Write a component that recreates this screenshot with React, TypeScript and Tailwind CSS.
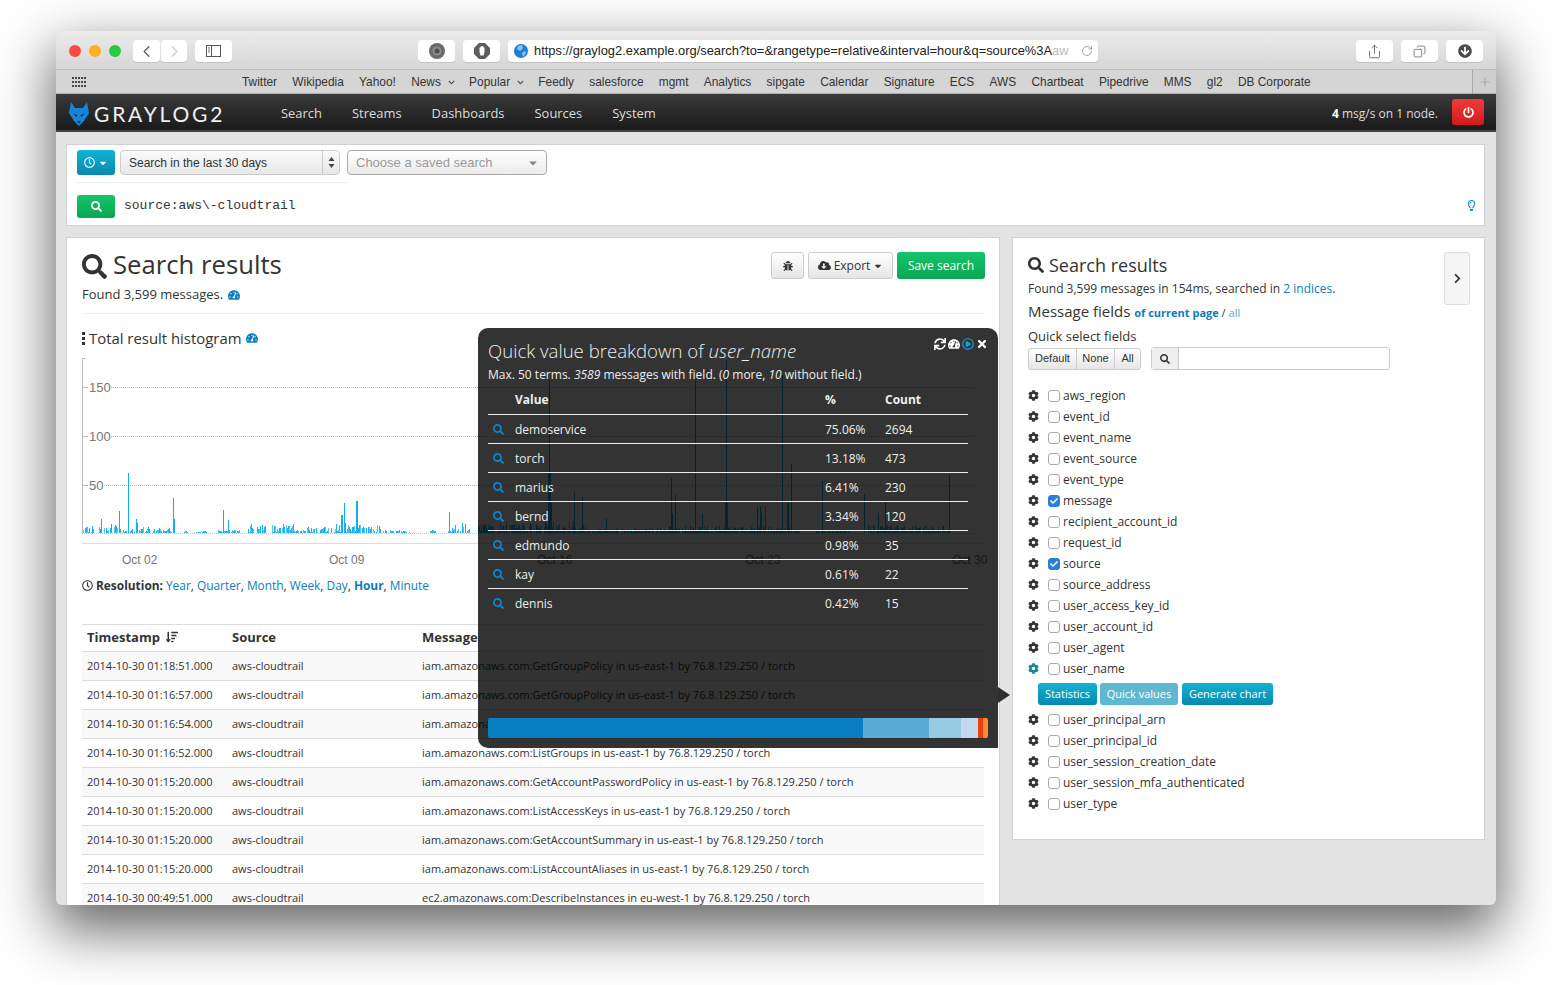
import React from 'react';
import {
  FaSearch, FaCog, FaSync, FaTachometerAlt, FaRegPlayCircle, FaTimes, FaRegClock, FaBug,
  FaCloudDownloadAlt, FaCaretDown, FaChevronRight, FaPowerOff, FaRegLightbulb, FaCheck,
  FaArrowCircleDown, FaChevronDown, FaSortAmountDown,
} from 'react-icons/fa';
import { ChevronLeft, ChevronRight, RotateCw, Share, Copy, Plus } from 'lucide-react';

const bookmarks = [
  { label: 'Twitter' }, { label: 'Wikipedia' }, { label: 'Yahoo!' }, { label: 'News', menu: true },
  { label: 'Popular', menu: true }, { label: 'Feedly' }, { label: 'salesforce' }, { label: 'mgmt' },
  { label: 'Analytics' }, { label: 'sipgate' }, { label: 'Calendar' }, { label: 'Signature' },
  { label: 'ECS' }, { label: 'AWS' }, { label: 'Chartbeat' }, { label: 'Pipedrive' }, { label: 'MMS' },
  { label: 'gl2' }, { label: 'DB Corporate' },
];

const navItems = ['Search', 'Streams', 'Dashboards', 'Sources', 'System'];

const quickValues = [
  ['demoservice', '75.06%', '2694'],
  ['torch', '13.18%', '473'],
  ['marius', '6.41%', '230'],
  ['bernd', '3.34%', '120'],
  ['edmundo', '0.98%', '35'],
  ['kay', '0.61%', '22'],
  ['dennis', '0.42%', '15'],
];

const rows = [
  ['2014-10-30 01:18:51.000', 'iam.amazonaws.com:GetGroupPolicy in us-east-1 by 76.8.129.250 / torch'],
  ['2014-10-30 01:16:57.000', 'iam.amazonaws.com:GetGroupPolicy in us-east-1 by 76.8.129.250 / torch'],
  ['2014-10-30 01:16:54.000', 'iam.amazonaws.com:GetUser in us-east-1 by 76.8.129.250 / torch'],
  ['2014-10-30 01:16:52.000', 'iam.amazonaws.com:ListGroups in us-east-1 by 76.8.129.250 / torch'],
  ['2014-10-30 01:15:20.000', 'iam.amazonaws.com:GetAccountPasswordPolicy in us-east-1 by 76.8.129.250 / torch'],
  ['2014-10-30 01:15:20.000', 'iam.amazonaws.com:ListAccessKeys in us-east-1 by 76.8.129.250 / torch'],
  ['2014-10-30 01:15:20.000', 'iam.amazonaws.com:GetAccountSummary in us-east-1 by 76.8.129.250 / torch'],
  ['2014-10-30 01:15:20.000', 'iam.amazonaws.com:ListAccountAliases in us-east-1 by 76.8.129.250 / torch'],
  ['2014-10-30 00:49:51.000', 'ec2.amazonaws.com:DescribeInstances in eu-west-1 by 76.8.129.250 / torch'],
];

const fieldsBefore = [
  'aws_region', 'event_id', 'event_name', 'event_source', 'event_type', 'message', 'recipient_account_id',
  'request_id', 'source', 'source_address', 'user_access_key_id', 'user_account_id', 'user_agent', 'user_name',
];
const fieldsAfter = [
  'user_principal_arn', 'user_principal_id', 'user_session_creation_date', 'user_session_mfa_authenticated', 'user_type',
];
const checkedFields = ['message', 'source'];

// spikes of the histogram: [x, height in px]
const spikes: [number, number][] = [
  [128, 60], [119, 22], [101, 14], [111, 9], [136, 14], [137, 10], [173, 35], [174, 14], [223, 23], [228, 13],
  [344, 30], [342, 18], [341, 18], [345, 10], [356, 32], [357, 32], [449, 21], [462, 10], [465, 9],
  [549, 153], [548, 60], [550, 60], [551, 30], [574, 41], [573, 12], [582, 36], [606, 15], [671, 55], [672, 20], [675, 38],
  [695, 153], [702, 19], [726, 173], [725, 30], [727, 30], [757, 26], [760, 27], [761, 20], [765, 27], [782, 158],
  [787, 30], [788, 30], [791, 69], [822, 52], [864, 39], [878, 20], [885, 31], [949, 58],
];

// low traffic runs: [from, to, max height]
const clusters: [number, number, number][] = [
  [83, 118, 8], [120, 127, 4], [130, 150, 6], [153, 172, 5], [183, 188, 2], [196, 207, 2], [218, 240, 3],
  [248, 266, 9], [272, 300, 9], [300, 332, 6], [332, 362, 10], [362, 388, 8], [390, 410, 3], [430, 436, 3],
  [446, 470, 9], [478, 530, 11], [530, 570, 11], [570, 590, 8], [592, 620, 4], [622, 650, 5], [650, 680, 7],
  [682, 730, 7], [730, 762, 7], [762, 790, 7], [790, 800, 3], [816, 850, 3], [868, 900, 8], [900, 945, 7], [946, 950, 4],
];

const noiseBars = clusters.flatMap(([from, to, max]) => {
  const bars: [number, number][] = [];
  for (let x = from; x < to; x++) {
    const r = Math.abs(Math.sin(x * 12.9898) * 43758.5453) % 1;
    if (r > (x > 478 ? 0.92 : 0.75)) continue;
    bars.push([x, 1 + Math.round(((r * 7.3) % 1) * (max - 1))]);
  }
  return bars;
});

const Histogram = () => (
  <svg width="920" height="220" className="block" style={{ fontFamily: '"Liberation Sans", sans-serif' }}>
    <line x1="0.5" y1="10" x2="0.5" y2="185" stroke="#bbb" />
    <line x1="0" y1="10.5" x2="3" y2="10.5" stroke="#bbb" />
    <line x1="0" y1="195.5" x2="902" y2="195.5" stroke="#ddd" />
    <line x1="0" y1="185.5" x2="893" y2="185.5" stroke="#ccc" strokeDasharray="1 1" />
    {[[150, 39.5], [100, 88.5], [50, 137.5]].map(([v, y]) => (
      <g key={v}>
        <line x1="0" y1={y} x2="6" y2={y} stroke="#bbb" />
        <line x1={v === 50 ? 22 : 29} y1={y} x2="893" y2={y} stroke="#bbb" strokeDasharray="1 1" />
        <text x="7" y={y + 4} fontSize="13" fill="#777">{v}</text>
      </g>
    ))}
    {noiseBars.map(([x, h], i) => (
      <rect key={i} x={x - 82} y={185 - h} width="1" height={h} fill={i % 3 === 0 ? '#55c6f0' : '#1ab4ee'} />
    ))}
    {spikes.map(([x, h], i) => (
      <rect key={i} x={x - 82} y={185 - h} width="1" height={h} fill="#12b0ec" />
    ))}
    {[['Oct 02', 40], ['Oct 09', 247], ['Oct 16', 455], ['Oct 23', 663], ['Oct 30', 870]].map(([t, x]) => (
      <text key={t} x={x} y="220" dy="-4" fontSize="12" fill="#777">{t}</text>
    ))}
  </svg>
);

const FoxLogo = () => (
  <svg width="20" height="24" viewBox="0 0 20 24">
    <path d="M2 0 L6 6 L14 6 L18 0 L20 11 L15 19 L10 24 L5 19 L0 11 Z" fill="#1585d8" />
    <path d="M4 11 L8.500 13.500 L7.500 15 Z M16 11 L11.500 13.500 L12.500 15 Z" fill="#0b2a44" />
    <path d="M8 19 L12 19 L10 22 Z" fill="#0b3a66" />
  </svg>
);

const ChromeButton = ({ className = '', children }: { className?: string; children: React.ReactNode }) => (
  <div className={`h-[22px] bg-white rounded-[4px] flex items-center justify-center shadow-[0_1px_0_#c4c4c4] ${className}`}>
    {children}
  </div>
);

const StackIcon = () => (
  <svg width="4" height="13" viewBox="0 0 4 13" className="shrink-0">
    <rect width="3" height="3" x="0" y="0" fill="#333" />
    <rect width="3" height="3" x="0" y="5" fill="#333" />
    <rect width="3" height="3" x="0" y="10" fill="#333" />
  </svg>
);

const FieldRow = ({ name }: { name: string }) => {
  const checked = checkedFields.includes(name);
  return (
    <div className="h-[21px] flex items-center">
      <FaCog className={`text-[11px] w-[11px] ${name === 'user_name' ? 'text-[#16859f]' : 'text-[#333]'}`} />
      <span
        className={`ml-[9px] w-[12px] h-[12px] rounded-[3px] flex items-center justify-center ${
          checked ? 'bg-[#2a7fd6] border border-[#2a7fd6]' : 'bg-white border border-[#aaa]'
        }`}
      >
        {checked && <FaCheck className="text-white text-[8px]" />}
      </span>
      <span className="ml-[3px] text-[12px] text-[#333]">{name}</span>
    </div>
  );
};

export default function App() {
  return (
    <div className="w-[1552px] h-[985px] bg-white pt-[31px] pl-[56px] overflow-hidden" style={{ fontFamily: '"Open Sans", sans-serif' }}>
      <div className="w-[1440px] h-[874px] rounded-[6px] overflow-hidden flex flex-col bg-[#e3e3e3] shadow-[0_22px_55px_4px_rgba(0,0,0,0.6)]">
        {/* Safari title bar */}
        <div className="h-[39px] shrink-0 flex items-center pl-[13px] pr-[13px] pt-[2px] bg-gradient-to-b from-[#ececec] to-[#d6d6d6] border-b border-[#bdbdbd]">
          <span className="w-[12px] h-[12px] rounded-full bg-[#fc4b47]" />
          <span className="w-[12px] h-[12px] rounded-full bg-[#fdb024] ml-[8px]" />
          <span className="w-[12px] h-[12px] rounded-full bg-[#2ac940] ml-[8px]" />
          <ChromeButton className="w-[27px] ml-[12px]"><ChevronLeft size={19} className="text-[#555]" strokeWidth={1.5} /></ChromeButton>
          <ChromeButton className="w-[26px] ml-[1px]"><ChevronRight size={19} className="text-[#ccc]" strokeWidth={1.5} /></ChromeButton>
          <ChromeButton className="w-[37px] ml-[8px]">
            <svg width="15" height="12" viewBox="0 0 15 12">
              <rect x="0.500" y="0.500" width="14" height="11" fill="none" stroke="#555" />
              <line x1="5.500" y1="0.500" x2="5.500" y2="11.500" stroke="#555" />
              <path d="M2 3h2M2 5h2M2 7h2" stroke="#777" />
            </svg>
          </ChromeButton>
          <ChromeButton className="w-[37px] ml-[186px]">
            <svg width="16" height="16" viewBox="0 0 16 16">
              <circle cx="8" cy="8" r="8" fill="#6a6a6a" />
              <circle cx="8" cy="8" r="4.500" fill="#8c8c8c" />
              <circle cx="8" cy="8" r="2.500" fill="#4d4d4d" />
            </svg>
          </ChromeButton>
          <ChromeButton className="w-[37px] ml-[8px]">
            <svg width="16" height="16" viewBox="0 0 16 16">
              <path d="M5 0h6l5 5v6l-5 5H5l-5-5V5z" fill="#5d5d5d" />
              <path d="M5.500 9V4.500h1V3.500h1V3h1v.5h1v1h1V9l-1 3.500H6.500z" fill="#fff" />
            </svg>
          </ChromeButton>
          <ChromeButton className="w-[590px] ml-[8px] !justify-start pl-[6px] pr-[5px]">
            <svg width="14" height="14" viewBox="0 0 14 14" className="shrink-0">
              <circle cx="7" cy="7" r="7" fill="#1e7fd6" />
              <path d="M4 2 L8 1 L9 4 L6 7 L3 5Z M8 9 L11 7 L12 9 L9 13Z" fill="#8cc5ef" />
            </svg>
            <span className="ml-[6px] text-[12.9px] text-[#222] whitespace-nowrap overflow-hidden flex-1" style={{ fontFamily: '"Liberation Sans", sans-serif' }}>
              https://graylog2.example.org/search?to=&amp;rangetype=relative&amp;interval=hour&amp;q=source%3A<span className="text-[#bbb]">aw</span>
            </span>
            <RotateCw size={12} className="text-[#777] shrink-0 ml-[8px]" strokeWidth={1.3} />
          </ChromeButton>
          <ChromeButton className="w-[37px] ml-[258px]"><Share size={15} className="text-[#555]" strokeWidth={1.3} /></ChromeButton>
          <ChromeButton className="w-[37px] ml-[8px]"><Copy size={13} className="text-[#555] scale-x-[-1]" strokeWidth={1.3} /></ChromeButton>
          <ChromeButton className="w-[37px] ml-[8px]"><FaArrowCircleDown className="text-[14px] text-[#4a4a4a]" /></ChromeButton>
        </div>

        {/* bookmarks bar */}
        <div className="h-[24px] shrink-0 flex items-center pt-[2px] bg-[#d5d5d5] border-b border-[#adadad] relative" style={{ fontFamily: '"Liberation Sans", sans-serif' }}>
          <svg width="15" height="11" viewBox="0 0 15 11" className="ml-[16px] shrink-0">
            {[0, 4, 8].flatMap((y) => [0, 3, 6, 9, 12].map((x) => <rect key={`${x}-${y}`} x={x} y={y} width="2" height="2" fill="#444" />))}
          </svg>
          <div className="flex items-center gap-[15.25px] ml-[155px] text-[11.9px] text-[#333]">
            {bookmarks.map((b) => (
              <span key={b.label} className="flex items-center whitespace-nowrap">
                {b.label}
                {b.menu && <FaChevronDown className="text-[7px] ml-[7px] mr-[-1px] text-[#444]" />}
              </span>
            ))}
          </div>
          <div className="absolute right-0 top-0 bottom-0 w-[24px] border-l border-[#a9a9a9] bg-[#cfcfcf] flex items-center justify-center">
            <Plus size={14} className="text-[#8f8f8f]" strokeWidth={1} />
          </div>
        </div>

        {/* main content */}
        <div className="flex-1 min-h-0 relative overflow-hidden">
          {/* navbar */}
          <div className="h-[38px] flex items-center pt-[3px] bg-gradient-to-b from-[#3a3a3a] to-[#1a1a1a] border-b-2 border-[#444] pl-[13px]">
            <FoxLogo />
            <span className="ml-[5px] text-[21px] leading-none text-[#f0f0f0] tracking-[2.8px] w-[172px]" style={{ fontFamily: 'Lato, sans-serif' }}>GRAYLOG2</span>
            <div className="flex text-[12.95px] text-[#ddd]">
              {navItems.map((n) => (
                <span key={n} className="px-[15px]">{n}</span>
              ))}
            </div>
            <div className="ml-auto text-[12px] text-[#ddd]"><b className="text-white">4</b> msg/s on 1 node.</div>
            <div className="ml-[14px] mr-[12px] mt-[-3px] w-[32px] h-[26px] rounded-[3px] bg-gradient-to-b from-[#ee3a3a] to-[#d21a1a] flex items-center justify-center">
              <FaPowerOff className="text-white text-[11px]" />
            </div>
          </div>

          {/* search bar */}
          <div className="mt-[12px] ml-[10px] mr-[11px] h-[82px] bg-white border border-[#d1d1d1] px-[10px] pt-[5px] relative">
            <div className="flex items-center w-[470px]">
              <div className="w-[38px] h-[25px] rounded-[3px] bg-gradient-to-b from-[#12b3d4] to-[#0689ac] flex items-center justify-center gap-[3px] text-white">
                <FaRegClock className="text-[11px]" /><FaCaretDown className="text-[10px]" />
              </div>
              <div className="ml-[5px] w-[220px] h-[25px] flex items-center rounded-[4px] border border-[#ccc] bg-gradient-to-b from-[#fafafa] to-[#e8e8e8] text-[12px] text-[#333] pl-[8px]" style={{ fontFamily: '"Liberation Sans", sans-serif' }}>
                <span className="flex-1">Search in the last 30 days</span>
                <span className="w-[17px] h-full border-l border-[#ccc] flex items-center justify-center">
                  <svg width="7" height="11" viewBox="0 0 7 11">
                    <path d="M3.500 0 L6.500 4 H0.500 Z M3.500 11 L6.500 7 H0.500 Z" fill="#444" />
                  </svg>
                </span>
              </div>
              <div className="ml-[7px] w-[200px] h-[25px] flex items-center rounded-[4px] border border-[#aaa] bg-gradient-to-b from-[#fff] to-[#ececec] text-[13px] text-[#999] pl-[8px] pr-[7px]" style={{ fontFamily: '"Liberation Sans", sans-serif' }}>
                <span className="flex-1">Choose a saved search</span>
                <FaCaretDown className="text-[12px] text-[#888]" />
              </div>
            </div>
            <div className="w-[270px] h-px bg-[#eee] mt-[7px]" />
            <div className="flex items-center mt-[12px]">
              <div className="w-[38px] h-[23px] rounded-[3px] bg-gradient-to-b from-[#16c46b] to-[#0aa653] flex items-center justify-center">
                <FaSearch className="text-white text-[11px]" />
              </div>
              <span className="ml-[9px] mt-[-2px] text-[13px] text-[#333]" style={{ fontFamily: '"Liberation Mono", monospace' }}>source:aws\-cloudtrail</span>
            </div>
            <FaRegLightbulb className="absolute right-[7px] top-[55px] text-[11px] text-[#0a86d8]" />
          </div>

          <div className="flex items-start gap-[12px] mt-[11px] ml-[10px] mr-[11px]">
            {/* left column */}
            <div className="w-[934px] h-[900px] shrink-0 bg-white border border-[#d1d1d1] px-[15px] pt-[12px]">
              <div className="flex items-start">
                <div className="flex-1 h-[63px]">
                  <div className="flex items-center text-[25.7px] leading-[30px] text-[#333]">
                    <FaSearch className="text-[25px] mr-[6px] mt-[2px]" />Search results
                  </div>
                  <div className="flex items-center gap-[5px] mt-[5px] text-[13px] text-[#333]">
                    Found 3,599 messages. <FaTachometerAlt className="text-[12px] text-[#0a7dc0]" />
                  </div>
                </div>
                <div className="flex items-center gap-[4px] mt-[2px] text-[12px] mr-[-1px]">
                  <div className="w-[33px] h-[27px] rounded-[3px] border border-[#ccc] bg-gradient-to-b from-white to-[#e6e6e6] flex items-center justify-center"><FaBug className="text-[10px] text-[#333]" /></div>
                  <div className="w-[85px] h-[27px] rounded-[3px] border border-[#ccc] bg-gradient-to-b from-white to-[#e6e6e6] flex items-center justify-center gap-[3px] text-[#333]">
                    <FaCloudDownloadAlt className="text-[13px]" />Export<FaCaretDown className="text-[10px]" />
                  </div>
                  <div className="w-[88px] h-[27px] rounded-[3px] bg-gradient-to-b from-[#16c46b] to-[#0aa653] flex items-center justify-center text-white">Save search</div>
                </div>
              </div>
              <div className="h-px bg-[#eee]" />
              <div className="flex items-center mt-[14px] h-[20px] text-[14.9px] text-[#333]">
                <StackIcon /><span className="ml-[3px]">Total result histogram</span>
                <FaTachometerAlt className="ml-[5px] text-[12px] text-[#0a7dc0]" />
              </div>
              <Histogram />
              <div className="flex items-center mt-[9px] text-[11.9px] text-[#0a7dc0]">
                <FaRegClock className="text-[11px] text-[#333] mr-[3px]" />
                <b className="text-[#333]">Resolution:</b>
                <span className="ml-[3px] whitespace-pre"><span>Year</span><span className="text-[#333]">, </span><span>Quarter</span><span className="text-[#333]">, </span><span>Month</span><span className="text-[#333]">, </span><span>Week</span><span className="text-[#333]">, </span><span>Day</span><span className="text-[#333]">, </span><b>Hour</b><span className="text-[#333]">, </span><span>Minute</span></span>
              </div>

              <table className="w-[902px] mt-[29px] table-fixed text-[11px] text-[#333] border-t border-[#ddd]">
                <colgroup>
                  <col className="w-[145px]" />
                  <col className="w-[190px]" />
                  <col />
                </colgroup>
                <thead>
                  <tr className="h-[27px] text-left text-[13px] border-b border-[#ddd]">
                    <th className="pl-[5px] pb-[1px] font-bold"><span className="flex items-center gap-[6px]">Timestamp <FaSortAmountDown className="text-[12px]" /></span></th>
                    <th className="pl-[5px] pb-[1px] font-bold">Source</th>
                    <th className="pl-[5px] pb-[1px] font-bold">Message</th>
                  </tr>
                </thead>
                <tbody>
                  {rows.map(([ts, msg], i) => (
                    <tr key={i} className={`h-[29px] border-b border-[#ddd] ${i % 2 === 0 ? 'bg-[#f9f9f9]' : 'bg-white'}`}>
                      <td className="pl-[5px]">{ts}</td>
                      <td className="pl-[5px]">aws-cloudtrail</td>
                      <td className="pl-[5px]">{msg}</td>
                    </tr>
                  ))}
                </tbody>
              </table>
            </div>

            {/* right column */}
            <div className="flex-1 h-[603px] bg-white border border-[#d1d1d1] pl-[15px] pt-[14px] relative">
              <div className="flex items-center text-[18px] leading-[26px] text-[#333]">
                <FaSearch className="text-[16px] mr-[5px]" />Search results
              </div>
              <div className="text-[12px] leading-[18px] text-[#333] mt-[2px]">
                Found 3,599 messages in 154ms, searched in <span className="text-[#0a7dc0]">2 indices</span>.
              </div>
              <div className="text-[15px] leading-[22px] text-[#333] mt-[2px]">
                Message fields <span className="text-[11px]"><b className="text-[#0a7dc0]">of current page</b> / <span className="text-[#5aa5d8]">all</span></span>
              </div>
              <div className="text-[13px] leading-[18px] text-[#333] mt-[3px]">Quick select fields</div>
              <div className="flex items-center mt-[2px]">
                <div className="flex h-[22px] rounded-[3px] border border-[#ccc] bg-gradient-to-b from-white to-[#e6e6e6] text-[11px] text-[#333]" style={{ fontFamily: '"Liberation Sans", sans-serif' }}>
                  <span className="w-[48px] flex items-center justify-center border-r border-[#ccc]">Default</span>
                  <span className="w-[38px] flex items-center justify-center border-r border-[#ccc]">None</span>
                  <span className="w-[25px] flex items-center justify-center">All</span>
                </div>
                <div className="ml-[10px] w-[239px] h-[23px] flex rounded-[3px] border border-[#ccc]">
                  <span className="w-[27px] bg-[#eee] border-r border-[#ccc] flex items-center justify-center">
                    <FaSearch className="text-[10px] text-[#333]" />
                  </span>
                </div>
              </div>
              <div className="mt-[15px]">
                {fieldsBefore.map((f) => <FieldRow key={f} name={f} />)}
                <div className="flex items-center gap-[3px] ml-[10px] mt-[4px] mb-[4px] text-[11px] text-white">
                  <span className="w-[59px] h-[22px] rounded-[3px] bg-gradient-to-b from-[#12b3d4] to-[#0689ac] flex items-center justify-center">Statistics</span>
                  <span className="w-[78px] h-[22px] rounded-[3px] bg-[#5fb8cd] flex items-center justify-center">Quick values</span>
                  <span className="ml-[1px] w-[91px] h-[22px] rounded-[3px] bg-gradient-to-b from-[#12b3d4] to-[#0689ac] flex items-center justify-center">Generate chart</span>
                </div>
                {fieldsAfter.map((f) => <FieldRow key={f} name={f} />)}
              </div>
              <div className="absolute right-[14px] top-[14px] w-[26px] h-[53px] bg-[#f5f5f5] border border-[#ddd] rounded-[3px] flex items-center justify-center">
                <FaChevronRight className="text-[11px] text-[#333]" />
              </div>
            </div>
          </div>

          {/* quick values popover */}
          <div className="absolute left-[422px] top-[234px] w-[520px] h-[420px] bg-black/80 rounded-t-[10px] rounded-bl-[10px] px-[10px] text-[#eee]">
            <div className="absolute right-[10px] top-[10px] flex items-center gap-[2px] text-white text-[12px]">
              <FaSync /><FaTachometerAlt /><FaRegPlayCircle className="text-[#1a9fe0]" /><FaTimes />
            </div>
            <div className="text-[18.6px] leading-[24px] font-light mt-[11px]">Quick value breakdown of <i>user_name</i></div>
            <div className="text-[12px] leading-[18px] mt-[3px]">Max. 50 terms. <i>3589</i> messages with field. (<i>0</i> more, <i>10</i> without field.)</div>
            <table className="w-[480px] table-fixed text-[12px] mt-[5px]">
              <colgroup>
                <col className="w-[27px]" />
                <col className="w-[310px]" />
                <col className="w-[60px]" />
                <col />
              </colgroup>
              <thead>
                <tr className="h-[25px] text-left border-b border-[#eee]">
                  <th />
                  <th className="font-bold pb-[2px]">Value</th>
                  <th className="font-bold pb-[2px]">%</th>
                  <th className="font-bold pb-[2px]">Count</th>
                </tr>
              </thead>
              <tbody>
                {quickValues.map(([v, p, c], i) => (
                  <tr key={v} className={`h-[29px] ${i < quickValues.length - 1 ? 'border-b border-[#eee]' : ''}`}>
                    <td className="pl-[5px] pt-[2px]"><FaSearch className="text-[11px] text-[#0a86d0]" /></td>
                    <td className="pt-[2px]">{v}</td>
                    <td className="pt-[2px]">{p}</td>
                    <td className="pt-[2px]">{c}</td>
                  </tr>
                ))}
              </tbody>
            </table>
            <div className="absolute left-[10px] top-[390px] w-[500px] h-[20px] rounded-[2px] overflow-hidden flex">
              <span className="w-[375px] bg-[#0a7ec2]" />
              <span className="w-[66px] bg-[#5aabd6]" />
              <span className="w-[32px] bg-[#95cbe2]" />
              <span className="w-[17px] bg-[#c3d8ee]" />
              <span className="w-[5px] bg-[#e8400f]" />
              <span className="w-[5px] bg-[#ff8a33]" />
            </div>
            <div className="absolute left-full top-[359px] w-0 h-0 border-y-[8px] border-y-transparent border-l-[12px] border-l-black/80" />
          </div>
        </div>
      </div>
    </div>
  );
}
